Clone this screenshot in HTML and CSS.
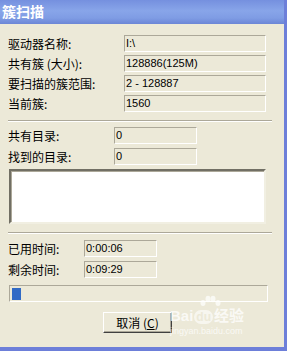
FILE: index.html
```html
<!DOCTYPE html>
<html lang="zh-CN">
<head>
  <meta charset="UTF-8">
  <title>簇扫描</title>
  <link rel="stylesheet" href="styles.css">
</head>
<body>

<div class="window">
  <div class="titlebar">簇扫描</div>

  <div class="panel">
    <div class="rows rows-drive">
      <span class="label">驱动器名称:</span><span class="field">I:\</span>
      <span class="label">共有簇 (大小):</span><span class="field">128886(125M)</span>
      <span class="label">要扫描的簇范围:</span><span class="field">2 - 128887</span>
      <span class="label">当前簇:</span><span class="field">1560</span>
    </div>

    <div class="sep sep-first"></div>

    <div class="rows rows-dirs">
      <span class="label">共有目录:</span><span class="field">0</span>
      <span class="label">找到的目录:</span><span class="field">0</span>
    </div>

    <div class="listbox"></div>

    <div class="sep sep-second"></div>

    <div class="rows rows-time">
      <span class="label">已用时间:</span><span class="field">0:00:06</span>
      <span class="label">剩余时间:</span><span class="field">0:09:29</span>
    </div>

    <div class="progress">
      <div class="chunk"></div>
    </div>

    <div class="actions">
      <button class="btn">取消 (<u>C</u>)</button>
    </div>

    <div class="watermark">
      <svg class="wm-paw" width="22" height="12" viewBox="0 0 22 12">
        <ellipse cx="4" cy="8" rx="2.5" ry="3" />
        <ellipse cx="9" cy="4" rx="2.5" ry="3.2" />
        <ellipse cx="14" cy="4" rx="2.5" ry="3.2" />
        <ellipse cx="19" cy="8" rx="2.5" ry="3" />
      </svg>
      <span class="wm-logo">Bai<span class="wm-du">du</span>经验</span>
      <span class="wm-url">jingyan.baidu.com</span>
    </div>
  </div>
</div>

</body>
</html>
```

FILE: styles.css
```css
body {
  margin: 0;
  background: #ece9d8;
  font-family: "Noto Sans CJK SC", "Noto Sans", sans-serif;
  font-size: 12px;
  color: #000;
}
.window {
  width: 284px;
  height: 347px;
  border-right: 3px solid #6d7fd9;
  border-bottom: 4px solid #6d7fd9;
  display: flex;
  flex-direction: column;
}
.titlebar {
  height: 24px;
  line-height: 23px;
  padding-left: 2px;
  color: #fff;
  font-size: 14px;
  font-weight: bold;
  background: linear-gradient(#7590df, #88a5e9 45%, #7f9ce4 75%, #6c86d6);
}
.panel {
  position: relative;
  flex: 1;
  padding-left: 8px;
  padding-top: 11px;
}
.rows {
  display: grid;
  row-gap: 3px;
  align-items: center;
}
.rows-drive {
  grid-template-columns: 116px 142px;
  grid-auto-rows: 17px;
}
.rows-dirs {
  grid-template-columns: 106px 83px;
  grid-auto-rows: 17px;
  row-gap: 4px;
  margin-top: 5px;
}
.rows-time {
  grid-template-columns: 76px 73px;
  grid-auto-rows: 17px;
  row-gap: 4px;
  margin-top: 6px;
}
.label {
  line-height: 17px;
  white-space: nowrap;
}
.field {
  box-sizing: border-box;
  height: 17px;
  line-height: 15px;
  padding-left: 1px;
  font-family: "Liberation Sans", sans-serif;
  font-size: 11px;
  border-top: 1px solid #aca899;
  border-left: 1px solid #aca899;
  border-right: 1px solid #fff;
  border-bottom: 1px solid #fff;
  white-space: nowrap;
}
.sep {
  width: 264px;
  height: 1px;
  background: #aca899;
  border-bottom: 1px solid #fff;
}
.sep-first {
  margin-top: 8px;
}
.sep-second {
  margin-top: 8px;
}
.listbox {
  box-sizing: border-box;
  margin: 4px 0 0 1px;
  width: 257px;
  height: 55px;
  background: #fff;
  border-top: 2px solid #716f64;
  border-left: 2px solid #716f64;
  border-right: 2px solid #f1efe2;
  border-bottom: 2px solid #f1efe2;
  box-shadow: inset 1px 1px 0 #aca899;
}
.progress {
  box-sizing: border-box;
  margin: 7px 0 0 1px;
  width: 259px;
  height: 17px;
  padding: 2px;
  border-top: 1px solid #aca899;
  border-left: 1px solid #aca899;
  border-right: 1px solid #fff;
  border-bottom: 1px solid #fff;
}
.chunk {
  width: 9px;
  height: 12px;
  background: #316ac5;
}
.actions {
  margin-top: 10px;
  padding-left: 95px;
}
.btn {
  box-sizing: border-box;
  width: 69px;
  height: 21px;
  padding: 0;
  font-family: "Noto Sans CJK SC", "Noto Sans", sans-serif;
  font-size: 12px;
  color: #000;
  background: #ece9d8;
  border-top: 1px solid #fff;
  border-left: 1px solid #fff;
  border-right: 1px solid #404040;
  border-bottom: 1px solid #404040;
  box-shadow: inset -1px -1px 0 #aca899;
}
.watermark {
  position: absolute;
  left: 170px;
  top: 271px;
  display: flex;
  flex-direction: column;
  color: rgba(255, 255, 255, 0.75);
  pointer-events: none;
}
.wm-paw {
  margin-left: 29px;
  fill: rgba(255, 255, 255, 0.7);
}
.wm-logo {
  font-family: "Liberation Sans", "Noto Sans CJK SC", sans-serif;
  font-size: 15px;
  font-weight: bold;
  line-height: 17px;
}
.wm-du {
  display: inline-block;
  margin: 0 1px;
  padding: 0 2px;
  border-radius: 7px;
  background: rgba(255, 255, 255, 0.6);
  color: #ece9d8;
  font-size: 12px;
  line-height: 14px;
}
.wm-url {
  margin-top: 2px;
  font-family: "Liberation Sans", sans-serif;
  font-size: 9px;
  line-height: 11px;
}
```
